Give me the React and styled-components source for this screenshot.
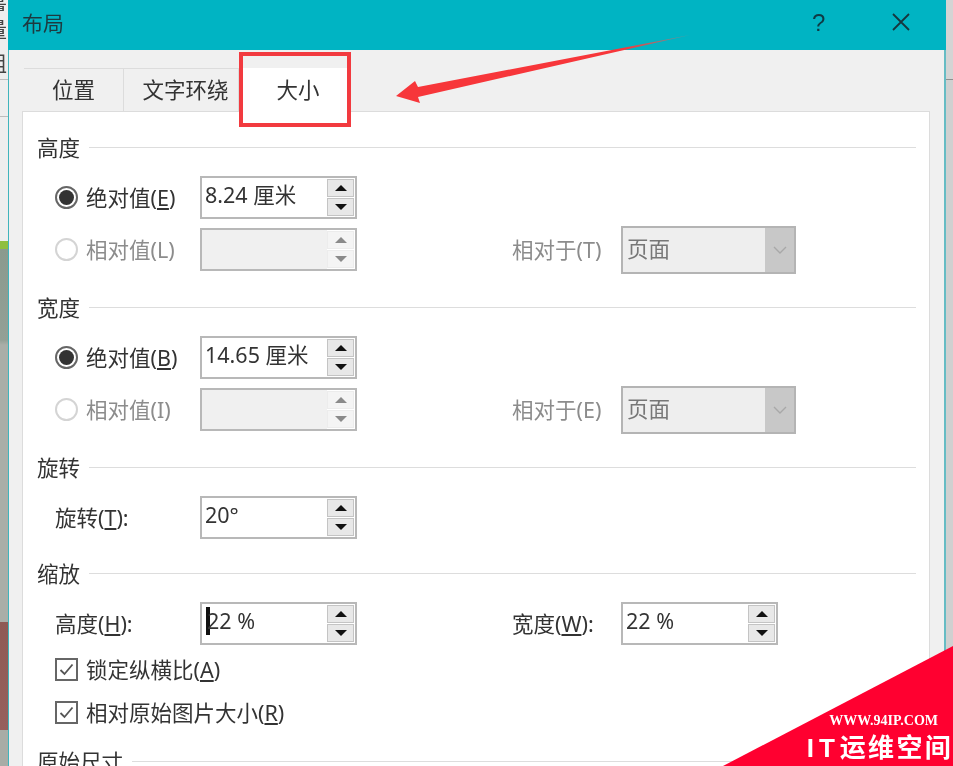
import React from "react";
import styled, { createGlobalStyle } from "styled-components";

const GlobalStyle = createGlobalStyle`
  html, body {
    margin: 0;
    padding: 0;
    background: #fff;
  }
`;

const Screen = styled.div`
  position: relative;
  display: flex;
  width: 953px;
  height: 766px;
  overflow: hidden;
  font-family: "Noto Sans", "Noto Sans CJK SC", sans-serif;
  font-size: 21.5px;
  color: #333;
  filter: blur(0.35px);
`;

const LeftStrip = styled.div`
  width: 8px;
  flex-shrink: 0;
  overflow: hidden;
  background: linear-gradient(
    to bottom,
    #eeeeee 0,
    #eeeeee 241px,
    #8fbf3f 241px,
    #8fbf3f 249px,
    #8a9a8e 249px,
    #93a096 340px,
    #a9aea8 345px,
    #a9aea8 622px,
    #8e5a55 622px,
    #96605c 730px,
    #a8aca6 730px
  );
`;

const StripChar = styled.div`
  box-sizing: border-box;
  height: ${(p) => p.$height}px;
  margin-left: -14px;
  overflow: hidden;
  line-height: ${(p) => p.$height}px;
  font-size: 21px;
  color: #444;
  border-bottom: 1px solid ${(p) => (p.$line ? "#bcbcbc" : "transparent")};
`;

const RightStrip = styled.div`
  flex: 1;
  height: 100%;
  background: linear-gradient(
    to bottom,
    #d4d4d4 0,
    #d4d4d4 79px,
    #8f8f8f 79px,
    #8f8f8f 80px,
    #d0d0d0 80px
  );
`;

const Dialog = styled.div`
  width: 938px;
  flex-shrink: 0;
  box-sizing: border-box;
  background: #f0f0f0;
  border-left: 1px solid #40b4bc;
  border-right: 2px solid #66bcc4;
`;

const TitleBar = styled.div`
  display: flex;
  align-items: center;
  height: 50px;
  margin: 0 -2px 0 -1px;
  padding-left: 14px;
  background: #00b4c3;
  color: #1d3a40;
  font-size: 21px;
`;

const Title = styled.div`
  flex: 1;
  margin-top: -6px;
`;

const HelpButton = styled.div`
  width: 80px;
  margin-top: -4px;
  font-family: "Liberation Sans", sans-serif;
  font-size: 24px;
  color: #0f3a44;
`;

const CloseButton = styled.div`
  display: flex;
  width: 54px;
  margin-top: -6px;
  color: #16363e;
`;

const TabStrip = styled.div`
  display: flex;
  height: 43px;
  margin: 18px 0 0 15px;
`;

const Tab = styled.div`
  display: flex;
  align-items: center;
  justify-content: center;
  box-sizing: border-box;
  width: ${(p) => p.$width}px;
  height: 43px;
  padding: 0 0 3px ${(p) => p.$indent ?? 0}px;
  border-top: 1px solid #dcdcdc;
  border-right: 1px solid #dcdcdc;
`;

const ActiveTab = styled.div`
  position: relative;
  display: flex;
  align-items: center;
  justify-content: center;
  width: 112px;
  height: 44px;
  padding: 0 0 3px 6px;
  box-sizing: border-box;
  background: #fff;
  z-index: 1;

  &::after {
    content: "";
    position: absolute;
    top: -16px;
    left: 0;
    right: 0;
    bottom: -15px;
    border: 4px solid #f23a3f;
  }
`;

const Panel = styled.div`
  box-sizing: border-box;
  width: 908px;
  height: 660px;
  margin-left: 13px;
  padding: 24px 13px 0 15px;
  background: #fff;
  border: 1px solid #dcdcdc;
`;

const Section = styled.div`
  display: flex;
  flex-direction: column;
  gap: 9px;
  padding-bottom: ${(p) => p.$after ?? 25}px;
`;

const HeadingRow = styled.div`
  display: flex;
  align-items: center;
  gap: 9px;
  height: 24px;
  margin: 0 0 7px -1px;
  line-height: 22px;
`;

const HeadingLine = styled.div`
  flex: 1;
  height: 1px;
  margin-top: -2px;
  background: #dddddd;
`;

const Row = styled.div`
  display: grid;
  grid-template-columns: 145px 157px 155px 109px 175px;
  align-items: center;
  height: 43px;
  padding-left: 17px;
  color: ${(p) => (p.$disabled ? "#8c8c8c" : "#333")};
`;

const RowLabel = styled.span`
  padding-bottom: 3px;
`;

const RadioLabel = styled.label`
  display: flex;
  align-items: center;
  gap: 8px;
`;

const RadioMark = styled.span`
  display: flex;
  align-items: center;
  justify-content: center;
  box-sizing: border-box;
  width: 23px;
  height: 23px;
  border: 2px solid ${(p) => (p.$disabled ? "#d4d4d4" : "#666")};
  border-radius: 50%;

  &::before {
    content: "";
    display: ${(p) => (p.$disabled ? "none" : "block")};
    width: 15px;
    height: 15px;
    border-radius: 50%;
    background: #333;
  }
`;

const SpinBox = styled.div`
  display: flex;
  align-items: stretch;
  box-sizing: border-box;
  width: 157px;
  height: 43px;
  border: 2px solid #b8b8b8;
  background: #fff;
`;

const SpinValue = styled.div`
  flex: 1;
  padding: 0 0 6px 3px;
  line-height: 34px;
  white-space: nowrap;
  background: ${(p) => (p.$disabled ? "#f0f0f0" : "#fff")};
  color: #333;
`;

const Caret = styled.span`
  display: inline-block;
  width: 4px;
  height: 28px;
  margin: 0 -3px 0 1px;
  vertical-align: -6px;
  background: #111;
`;

const SpinButtons = styled.div`
  display: flex;
  flex-direction: column;
  gap: 1px;
  width: 27px;
  padding: 1px 1px 1px 0;
`;

const SpinButton = styled.div`
  flex: 1;
  display: flex;
  align-items: center;
  justify-content: center;
  border: 1px solid ${(p) => (p.$disabled ? "#ececec" : "#c4c4c4")};
  background: ${(p) => (p.$disabled ? "#f4f4f4" : "#e8e8e8")};
  color: ${(p) => (p.$disabled ? "#8a8a8a" : "#111")};

  &::before {
    content: "";
    width: 0;
    height: 0;
    border-left: 6px solid transparent;
    border-right: 6px solid transparent;
    ${(p) => (p.$down ? "border-top" : "border-bottom")}: 6px solid currentColor;
  }
`;

const SelectBox = styled.div`
  display: flex;
  box-sizing: border-box;
  width: 175px;
  height: 48px;
  margin: -3px 0;
  border: 2px solid #b4b4b4;
  background: #eeeeee;
`;

const SelectValue = styled.div`
  flex: 1;
  padding: 0 0 3px 4px;
  line-height: 41px;
  color: #777;
`;

const SelectArrow = styled.div`
  display: flex;
  align-items: center;
  justify-content: center;
  width: 29px;
  background: #c8c8c8;
  color: #a8a8a8;
`;

const CheckRow = styled.label`
  display: flex;
  align-items: center;
  gap: 8px;
  height: 23px;
  margin-top: ${(p) => p.$top}px;
  padding-left: 17px;
`;

const CheckMark = styled.span`
  display: flex;
  align-items: center;
  justify-content: center;
  box-sizing: border-box;
  width: 23px;
  height: 23px;
  border: 2px solid #666;
  color: #555;
`;

const ArrowMark = styled.svg`
  position: absolute;
  top: 0;
  left: 0;
  z-index: 2;
  pointer-events: none;
`;

const Watermark = styled.div`
  position: absolute;
  right: 0;
  bottom: 0;
  z-index: 3;
  display: flex;
  flex-direction: column;
  align-items: flex-end;
  box-sizing: border-box;
  width: 230px;
  height: 120px;
  padding-top: 67px;
  background: #ff0030;
  clip-path: polygon(100% 0, 100% 100%, 0 100%);
  color: #fff;
`;

const WatermarkUrl = styled.div`
  margin-right: 15px;
  font-family: "Liberation Serif", serif;
  font-size: 14px;
  font-weight: 700;
  line-height: 16px;
`;

const WatermarkName = styled.div`
  margin-top: 3px;
  font-family: "Liberation Sans", "Noto Sans CJK SC", sans-serif;
  font-size: 26px;
  font-weight: 700;
  letter-spacing: 2.3px;
  line-height: 32px;
  white-space: nowrap;
`;

const WatermarkLatin = styled.span`
  letter-spacing: 5px;
`;

const Spin = ({ value, disabled, caret }) => (
  <SpinBox>
    <SpinValue $disabled={disabled}>
      {caret && <Caret />}
      {value}
    </SpinValue>
    <SpinButtons>
      <SpinButton $disabled={disabled} />
      <SpinButton $disabled={disabled} $down />
    </SpinButtons>
  </SpinBox>
);

const Select = ({ value }) => (
  <SelectBox>
    <SelectValue>{value}</SelectValue>
    <SelectArrow>
      <svg width="14" height="8" viewBox="0 0 14 8" fill="none" stroke="currentColor" strokeWidth="1.4">
        <path d="M1 1l6 6 6-6" />
      </svg>
    </SelectArrow>
  </SelectBox>
);

const Heading = ({ children }) => (
  <HeadingRow>
    {children}
    <HeadingLine />
  </HeadingRow>
);

const Radio = ({ children, disabled }) => (
  <RadioLabel>
    <RadioMark $disabled={disabled} />
    <RowLabel>{children}</RowLabel>
  </RadioLabel>
);

const Check = ({ children, top }) => (
  <CheckRow $top={top}>
    <CheckMark>
      <svg width="15" height="13" viewBox="0 0 15 13" fill="none" stroke="currentColor" strokeWidth="1.8">
        <path d="M1.5 7l4 4 8-9.5" />
      </svg>
    </CheckMark>
    <RowLabel>{children}</RowLabel>
  </CheckRow>
);

const App = () => {
  return (
    <Screen>
      <GlobalStyle />
      <LeftStrip>
        <StripChar $height={12}>量</StripChar>
        <StripChar $height={34}>量</StripChar>
        <StripChar $height={34} $line>
          组
        </StripChar>
        <StripChar $height={37} $line>
          3
        </StripChar>
      </LeftStrip>
      <Dialog>
        <TitleBar>
          <Title>布局</Title>
          <HelpButton>?</HelpButton>
          <CloseButton>
            <svg width="18" height="18" viewBox="0 0 18 18" fill="none" stroke="currentColor" strokeWidth="1.8">
              <path d="M1 1l16 16M17 1L1 17" />
            </svg>
          </CloseButton>
        </TitleBar>
        <TabStrip>
          <Tab $width={100}>位置</Tab>
          <Tab $width={115} $indent={9}>
            文字环绕
          </Tab>
          <ActiveTab>大小</ActiveTab>
        </TabStrip>
        <Panel>
          <Section>
            <Heading>高度</Heading>
            <Row>
              <Radio>
                绝对值(<u>E</u>)
              </Radio>
              <Spin value="8.24 厘米" />
            </Row>
            <Row $disabled>
              <Radio disabled>相对值(L)</Radio>
              <Spin disabled />
              <span />
              <RowLabel>相对于(T)</RowLabel>
              <Select value="页面" />
            </Row>
          </Section>
          <Section>
            <Heading>宽度</Heading>
            <Row>
              <Radio>
                绝对值(<u>B</u>)
              </Radio>
              <Spin value="14.65 厘米" />
            </Row>
            <Row $disabled>
              <Radio disabled>相对值(I)</Radio>
              <Spin disabled />
              <span />
              <RowLabel>相对于(E)</RowLabel>
              <Select value="页面" />
            </Row>
          </Section>
          <Section $after={23}>
            <Heading>旋转</Heading>
            <Row>
              <RowLabel>
                旋转(<u>T</u>):
              </RowLabel>
              <Spin value="20°" />
            </Row>
          </Section>
          <Section $after={26}>
            <Heading>缩放</Heading>
            <Row>
              <RowLabel>
                高度(<u>H</u>):
              </RowLabel>
              <Spin value="22 %" caret />
              <span />
              <RowLabel>
                宽度(<u>W</u>):
              </RowLabel>
              <Spin value="22 %" />
            </Row>
            <Check top={4}>
              锁定纵横比(<u>A</u>)
            </Check>
            <Check top={11}>
              相对原始图片大小(<u>R</u>)
            </Check>
          </Section>
          <Heading>原始尺寸</Heading>
        </Panel>
      </Dialog>
      <RightStrip />
      <ArrowMark width="953" height="130" viewBox="0 0 953 130">
        <defs>
          <linearGradient id="tail" x1="396" y1="96" x2="687" y2="36" gradientUnits="userSpaceOnUse">
            <stop offset="0.78" stopColor="#f7363a" />
            <stop offset="1" stopColor="#8a8a8a" stopOpacity="0.8" />
          </linearGradient>
        </defs>
        <polygon points="396,96 415,81 418,87 690,35 418,97 420,103" fill="url(#tail)" />
      </ArrowMark>
      <Watermark>
        <WatermarkUrl>WWW.94IP.COM</WatermarkUrl>
        <WatermarkName>
          <WatermarkLatin>IT</WatermarkLatin>运维空间
        </WatermarkName>
      </Watermark>
    </Screen>
  );
};

export default App;
